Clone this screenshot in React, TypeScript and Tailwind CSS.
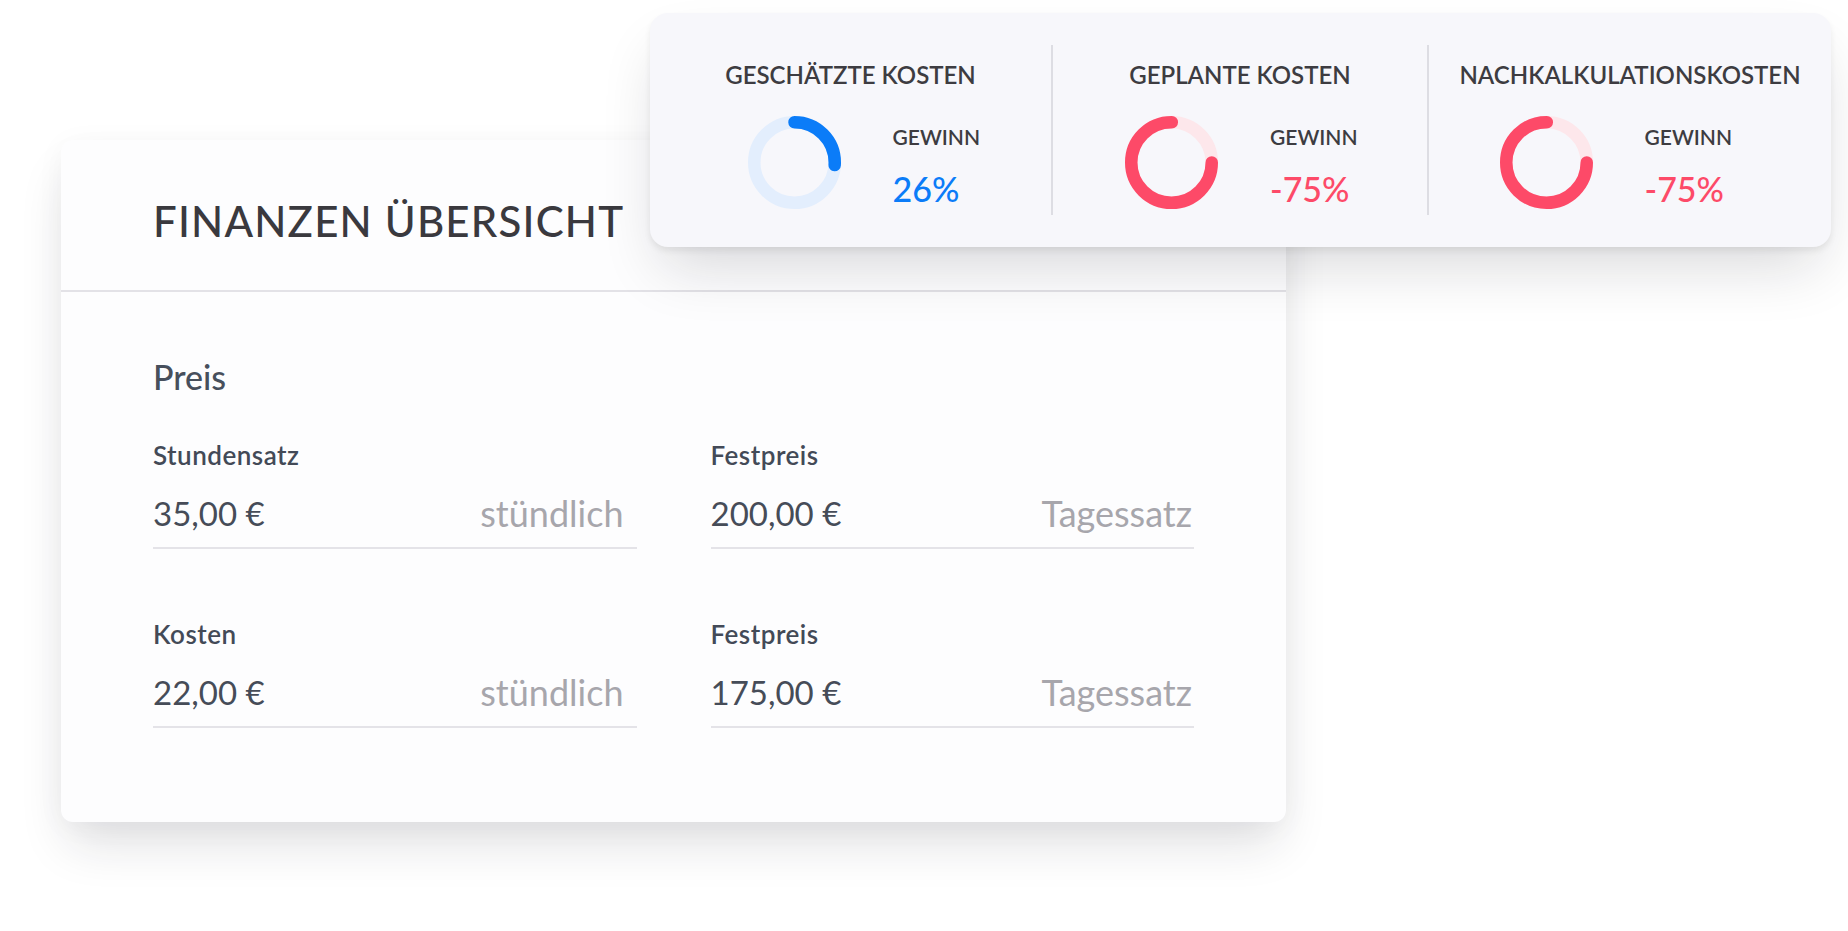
import React from 'react';

type Stat = {
  title: string;
  value: number;
  shift: string;
  section: string;
};

const stats: Stat[] = [
  { title: 'GESCHÄTZTE KOSTEN', value: 26, shift: 'ml-[24px]', section: 'w-[401px]' },
  { title: 'GEPLANTE KOSTEN', value: -75, shift: '', section: 'w-[374px]' },
  { title: 'NACHKALKULATIONSKOSTEN', value: -75, shift: 'mr-[31px]', section: 'w-[402px]' },
];

const rows = [
  [
    { label: 'Stundensatz', value: '35,00 €', unit: 'stündlich', inset: 'pr-[13px]' },
    { label: 'Festpreis', value: '200,00 €', unit: 'Tagessatz', inset: 'pr-[2px]' },
  ],
  [
    { label: 'Kosten', value: '22,00 €', unit: 'stündlich', inset: 'pr-[13px]' },
    { label: 'Festpreis', value: '175,00 €', unit: 'Tagessatz', inset: 'pr-[2px]' },
  ],
];

// ring chart: positive runs clockwise from 12 o'clock, negative runs the other way
function Donut({ value }: { value: number }) {
  const r = 40.25;
  const c = 2 * Math.PI * r;
  const positive = value >= 0;
  const part = (Math.abs(value) / 100) * c;
  const color = positive ? '#0b7cf8' : '#fd4a68';
  const track = positive ? '#e3eefd' : '#fde7eb';
  // negative arc ends at the top, so it starts (100 - value)% around
  const rotate = positive ? -90 : -90 + (1 - Math.abs(value) / 100) * 360;
  return (
    <svg width="93" height="93" viewBox="0 0 93 93" className="shrink-0">
      <circle cx="46.5" cy="46.5" r={r} fill="none" stroke={track} strokeWidth="12.5" />
      <circle
        cx="46.5"
        cy="46.5"
        r={r}
        fill="none"
        stroke={color}
        strokeWidth="12.5"
        strokeLinecap="round"
        strokeDasharray={`${part} ${c}`}
        transform={`rotate(${rotate} 46.5 46.5)`}
      />
    </svg>
  );
}

function StatSection({ stat }: { stat: Stat }) {
  const positive = stat.value >= 0;
  return (
    <div className={`${stat.section} flex flex-col items-center pt-[16px]`}>
      <p className="text-[24px] leading-[28px] font-semibold text-[#3d3c41] whitespace-nowrap">{stat.title}</p>
      <div className={`mt-[27px] flex items-start gap-[52px] ${stat.shift}`}>
        <Donut value={stat.value} />
        <div className="w-[85px] pt-[8px]">
          <p className="text-[21px] leading-[26px] font-semibold text-[#3d3c41]">GEWINN</p>
          <p className={`mt-[20px] text-[34px] leading-[38px] font-medium whitespace-nowrap ${positive ? 'text-[#0b7cf8]' : 'text-[#fd4a68]'}`}>
            {stat.value}%
          </p>
        </div>
      </div>
    </div>
  );
}

function Field({ label, value, unit, inset }: { label: string; value: string; unit: string; inset: string }) {
  return (
    <div>
      <p className="text-[26px] leading-[30px] font-semibold tracking-[0.5px] text-[#434a57]">{label}</p>
      <div className={`mt-[23px] flex items-center justify-between pb-[14px] border-b-2 border-[#e4e3e8] ${inset}`}>
        <span className="text-[33px] leading-[40px] text-[#464c58]">{value}</span>
        <span className="text-[36px] leading-[40px] text-[#a7a6ac]">{unit}</span>
      </div>
    </div>
  );
}

export default function App() {
  return (
    <div className="relative w-[1848px] h-[931px] overflow-hidden bg-white font-[Lato,'Open_Sans',sans-serif]">
      {/* finance overview card */}
      <div className="ml-[61px] mt-[140px] w-[1225px] rounded-xl bg-[#fdfdfe] shadow-[0_28px_50px_-8px_rgba(30,30,40,0.14),0_4px_30px_rgba(30,30,40,0.04)]">
        <div className="h-[152px] pt-[56px] px-[92px] border-b-2 border-[#e3e2e7]">
          <h1 className="text-[42px] leading-[50px] font-medium tracking-[1.2px] text-[#3a393e]">FINANZEN ÜBERSICHT</h1>
        </div>
        <div className="px-[92px] pt-[66px] pb-[94px]">
          <p className="text-[34px] leading-[38px] font-medium text-[#474f5c]">Preis</p>
          <div className="mt-[44px] grid grid-cols-2 gap-x-[74px] gap-y-[70px]">
            {rows.flat().map((f, i) => (
              <Field key={i} {...f} />
            ))}
          </div>
        </div>
      </div>

      {/* profit summary floating over the card */}
      <div className="absolute left-[650px] top-[13px] flex h-[234px] w-[1181px] rounded-[18px] bg-[#f7f7fb] py-[32px] shadow-[0_4px_6px_rgba(0,0,0,0.07),0_30px_60px_-12px_rgba(20,20,30,0.16)]">
        {stats.map((s, i) => (
          <React.Fragment key={s.title}>
            {i > 0 && <div className="w-[2px] self-stretch bg-[#dddde3]" />}
            <StatSection stat={s} />
          </React.Fragment>
        ))}
      </div>
    </div>
  );
}
